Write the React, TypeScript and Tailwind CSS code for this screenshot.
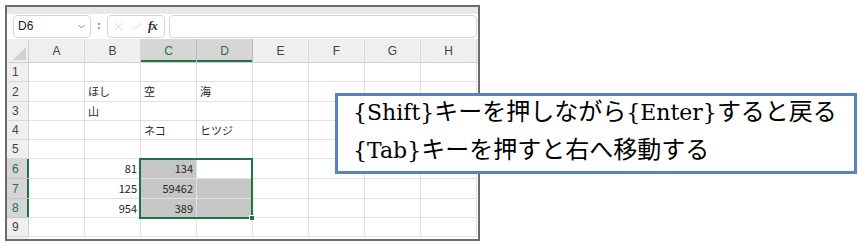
import { ChevronDown, X, Check } from "lucide-react";

/* ================= Data ================= */

const cols = ["A", "B", "C", "D", "E", "F", "G", "H"];

const rowHeights = ["h-[19px]", "h-[20px]", "h-[19px]", "h-[19px]", "h-[19px]", "h-[20px]", "h-[20px]", "h-[19px]", "h-[19px]"];

// row -> col -> value
const cells: Record<number, Record<string, string>> = {
  2: { B: "ほし", C: "空", D: "海" },
  3: { B: "山" },
  4: { C: "ネコ", D: "ヒツジ" },
  6: { B: "81", C: "134" },
  7: { B: "125", C: "59462" },
  8: { B: "954", C: "389" },
};

const isNum = (v: string) => /^\d+$/.test(v);
const inSel = (r: number, c: string) => r >= 6 && r <= 8 && (c === "C" || c === "D");
const selRow = (r: number) => r >= 6 && r <= 8;
const selCol = (c: string) => c === "C" || c === "D";

/* ================= Formula Bar ================= */

function FormulaBar() {
  return (
    <div className="flex items-center h-[25px] bg-white pl-[6px] pr-[1px]">
      <div className="flex items-center justify-between w-[78px] h-[23px] rounded-[4px] border border-[#d6d6d6] pl-[4px] pr-[3px]">
        <span className="text-[12px] text-[#222] font-['Liberation_Sans',sans-serif]">D6</span>
        <ChevronDown size={11} strokeWidth={1.5} className="text-[#555]" />
      </div>
      <div className="w-[16px] flex flex-col items-center gap-[2px]">
        <span className="w-[2px] h-[2px] bg-[#9a9a9a]" />
        <span className="w-[2px] h-[2px] bg-[#9a9a9a]" />
      </div>
      <div className="flex items-center gap-[5px] w-[58px] h-[23px] rounded-[4px] border border-[#d6d6d6] px-[4px]">
        <X size={13} strokeWidth={1} className="text-[#b5b5b5]" />
        <Check size={13} strokeWidth={1} className="text-[#b5b5b5]" />
        <span className="italic font-bold text-[13px] text-[#333] font-['Liberation_Serif',serif] tracking-[-1px]">fx</span>
      </div>
      <div className="ml-[4px] flex-1 h-[23px] rounded-[4px] border border-[#d6d6d6]" />
    </div>
  );
}

/* ================= Header Row ================= */

function HeaderRow() {
  return (
    <div className="flex h-[24px] bg-[#efefef] border-b border-[#d0d0d0]">
      <div className="w-[22px] border-r border-[#d0d0d0] flex items-end justify-end pr-[2px] pb-[2px]">
        <svg width="13" height="13" viewBox="0 0 13 13">
          <polygon points="13,0 13,13 0,13" fill="#d2d2d2" />
        </svg>
      </div>
      {cols.map((c) => (
        <div
          key={c}
          className={`w-[56px] flex items-center justify-center text-[12px] font-['Liberation_Sans',sans-serif] border-r ${
            selCol(c)
              ? "bg-[#d6d6d6] text-[#217346] border-[#bdbdbd] shadow-[inset_0_-2px_0_#217346]"
              : "text-[#444] border-[#d8d8d8]"
          }`}
        >
          {c}
        </div>
      ))}
    </div>
  );
}

/* ================= Grid ================= */

function Grid() {
  return (
    <div className="relative">
      {rowHeights.map((h, i) => {
        const r = i + 1;
        return (
          <div key={r} className={`flex ${h}`}>
            <div
              className={`w-[22px] flex items-center pl-[5px] text-[12px] font-['Liberation_Sans',sans-serif] border-b ${
                selRow(r)
                  ? "bg-[#d6d6d6] text-[#217346] border-[#c4c4c4] shadow-[inset_-2px_0_0_#217346]"
                  : "bg-[#efefef] text-[#444] border-[#d8d8d8] border-r border-r-[#d0d0d0]"
              }`}
            >
              {r}
            </div>
            {cols.map((c) => {
              const v = cells[r]?.[c] ?? "";
              const active = r === 6 && c === "D";
              return (
                <div
                  key={c}
                  className={`w-[56px] flex items-center px-[3px] text-[11px] text-[#262626] font-['Noto_Sans_CJK_JP',sans-serif] border-r border-b border-[#e1e1e1] ${
                    isNum(v) ? "justify-end" : "justify-start"
                  } ${inSel(r, c) && !active ? "bg-[#c6c6c6] border-[#d4d4d4]" : ""}`}
                >
                  {v}
                </div>
              );
            })}
          </div>
        );
      })}
      <div className="flex h-[2px]">
        <div className="w-[22px] bg-[#efefef]" />
      </div>

      {/* selection C6:D8 */}
      <div className="absolute left-[132px] top-[95px] w-[114px] h-[61px] border-2 border-[#217346] pointer-events-none">
        <div className="absolute -right-[4px] -bottom-[4px] w-[6px] h-[6px] bg-[#217346] border border-white" />
      </div>
    </div>
  );
}

/* ================= Callout ================= */

function Key({ children }: { children: React.ReactNode }) {
  return <span className="font-['DejaVu_Serif',serif] text-[22px]">{children}</span>;
}

/* ================= Main ================= */

export default function App() {
  return (
    <div className="relative w-[858px] h-[244px] bg-white overflow-hidden">
      <div className="ml-[5px] mt-[5px] w-[475px] h-[236px] border-2 border-[#6b6b6b] overflow-hidden flex flex-col">
        <div className="h-[7px] bg-[#e8e8e8] shrink-0" />
        <FormulaBar />
        <div className="h-[1px] bg-white" />
        <HeaderRow />
        <Grid />
      </div>

      {/* callout */}
      <div className="absolute left-[335px] top-[93px] w-[522px] h-[81px] border-[3px] border-[#5a82bb] bg-white pl-[15px] text-black text-[24px] leading-[37px] font-['Noto_Sans_CJK_JP',serif]">
        <div className="h-[38px] -mt-[5px] whitespace-nowrap">
          <Key>{"{Shift}"}</Key>キーを押しながら<Key>{"{Enter}"}</Key>すると戻る
        </div>
        <div className="h-[38px] whitespace-nowrap">
          <Key>{"{Tab}"}</Key>キーを押すと右へ移動する
        </div>
      </div>
    </div>
  );
}
